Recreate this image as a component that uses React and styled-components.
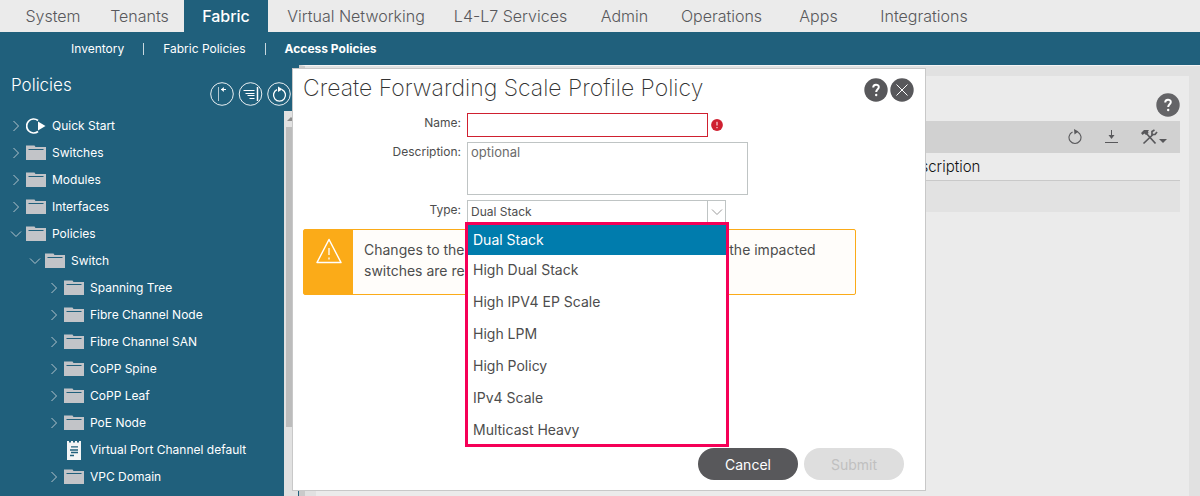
import React, { useState } from 'react';
import styled, { createGlobalStyle, css } from 'styled-components';

const GlobalStyle = createGlobalStyle`
  * {
    box-sizing: border-box;
  }

  html, body, #root {
    height: 100%;
  }

  body {
    margin: 0;
    overflow: hidden;
    background: #20607c;
    font-family: Inter, 'Liberation Sans', sans-serif;
    font-weight: 300;
    color: #4d4d4d;
  }

  button, input, textarea, select {
    font: inherit;
    color: inherit;
    margin: 0;
  }
`;

const Page = styled.div`
  display: flex;
  flex-direction: column;
  height: 100%;
`;

const MainNav = styled.nav`
  display: grid;
  grid-template-columns: 84px 89px 84px 176px 133px 95px 99px 95px 116px;
  flex: none;
  height: 32px;
  padding-left: 11px;
  background: #ebebeb;
`;

const NavTab = styled.a`
  display: flex;
  align-items: center;
  justify-content: center;
  font-size: 16px;
  white-space: nowrap;
  text-decoration: none;
  color: ${({ $active }) => ($active ? '#fff' : '#58585b')};
  background: ${({ $active }) => ($active ? '#20607c' : 'transparent')};
  font-weight: ${({ $active }) => ($active ? 500 : 300)};
`;

const SubNav = styled.nav`
  display: flex;
  align-items: center;
  flex: none;
  height: 33px;
  padding-left: 52px;
  background: #20607c;
`;

const SubLink = styled.a`
  padding: 0 19px;
  font-size: 12px;
  line-height: 12px;
  color: #fff;
  text-decoration: none;
  font-weight: ${({ $active }) => ($active ? 700 : 400)};

  & + & {
    border-left: 1px solid #c8d8df;
  }
`;

const Body = styled.div`
  display: flex;
  flex: 1;
  min-height: 0;
`;

const Sidebar = styled.aside`
  display: flex;
  flex-direction: column;
  flex: none;
  width: 299px;
  padding-right: 1px;
  background: #20607c;
  color: #fff;
`;

const SidebarHeader = styled.header`
  display: flex;
  justify-content: space-between;
  align-items: flex-start;
  flex: none;
  height: 46px;
  padding: 10px 7px 0 11px;
`;

const SidebarTitle = styled.h2`
  margin: 0;
  font-size: 17px;
  line-height: 20px;
  font-weight: 300;
`;

const SidebarTools = styled.div`
  display: flex;
  gap: 4px;
  padding-top: 7px;
`;

const IconButton = styled.button`
  display: flex;
  align-items: center;
  justify-content: center;
  padding: 0;
  border: 0;
  background: none;
  cursor: pointer;
`;

const SidebarScroll = styled.div`
  display: flex;
  flex: 1;
  min-height: 0;
`;

const Tree = styled.ul`
  flex: 1;
  margin: 0;
  padding: 1px 0 0;
  list-style: none;
  overflow: hidden;
`;

const TreeRow = styled.li`
  display: flex;
  align-items: center;
  height: 27px;
  padding-left: ${({ $level }) => 8 + $level * 19}px;
  font-size: 12px;
  font-weight: 400;
  white-space: nowrap;
`;

const Twisty = styled.span`
  display: flex;
  justify-content: center;
  width: 16px;
  margin-right: 2px;
`;

const TreeIcon = styled.span`
  display: flex;
  justify-content: center;
  width: 20px;
  margin-right: 6px;
`;

const ScrollTrack = styled.div`
  flex: none;
  width: 14px;
  padding: 0 2px;
  background: #e1e1e1;
`;

const ScrollArrow = styled.div`
  display: flex;
  justify-content: center;
  align-items: center;
  height: 16px;
`;

const ScrollThumb = styled.div`
  height: 300px;
  background: #bcbcbc;
`;

const Main = styled.main`
  flex: 1;
  min-width: 0;
  padding: 10px 11px 0 11px;
  border-top: 1px solid #f4f4f4;
  border-left: 6px solid #cacaca;
  background: #e1e1e1;
`;

const Panel = styled.section`
  height: 100%;
  padding: 17px 9px 0;
  background: #ebebeb;
`;

const PanelHeader = styled.header`
  display: flex;
  justify-content: flex-end;
  align-items: flex-start;
  height: 28px;
`;

const Toolbar = styled.div`
  display: flex;
  justify-content: flex-end;
  align-items: center;
  gap: 23px;
  height: 32px;
  padding-right: 13px;
  background: #d1d1d1;
`;

const DataTable = styled.table`
  width: 100%;
  border-collapse: collapse;
  table-layout: fixed;
  font-size: 15px;

  th {
    height: 27px;
    padding: 0 8px;
    border-bottom: 1px solid #c9c9c9;
    font-weight: 300;
    text-align: left;
    color: #111;
  }

  th:first-child {
    width: 568px;
  }

  td {
    height: 32px;
    background: #e2e2e2;
  }
`;

const Overlay = styled.div`
  position: fixed;
  inset: 68px 0 0;
  display: flex;
  justify-content: center;
  align-items: flex-start;
  padding-left: 18px;
`;

const Dialog = styled.section`
  width: 634px;
  background: #fff;
  border: 1px solid #c8c8c8;
`;

const DialogHeader = styled.header`
  display: flex;
  align-items: flex-start;
  justify-content: space-between;
  height: 44px;
  padding: 8px 11px 0 10px;
`;

const DialogTitle = styled.h1`
  margin: 0;
  font-size: 23px;
  line-height: 22px;
  font-weight: 200;
  color: #333;
`;

const DialogActions = styled.div`
  display: flex;
  gap: 2px;
  padding-top: 1px;
`;

const Form = styled.form`
  display: flex;
  flex-direction: column;
  padding: 0 18px 10px 10px;
`;

const Field = styled.div`
  position: relative;
  display: flex;
  align-items: flex-start;
  margin-bottom: 5px;
`;

const Label = styled.label`
  width: 158px;
  margin-right: 6px;
  font-size: 12px;
  line-height: 20px;
  font-weight: 400;
  text-align: right;
`;

const control = css`
  display: block;
  border: 1px solid #bfc4c4;
  border-radius: 0;
  background: #fff;
  padding: 0 3px;
  font-size: 12px;
  font-weight: 400;
  outline: none;
`;

const NameInput = styled.input`
  ${control}
  width: 241px;
  height: 24px;
  border-color: #cf2030;
`;

const ErrorMark = styled.span`
  display: flex;
  padding: 6px 0 0 3px;
`;

const DescriptionInput = styled.textarea`
  ${control}
  width: 281px;
  height: 53px;
  line-height: 18px;
  font-size: 13px;
  resize: none;

  &::placeholder {
    color: #6b6b6b;
    opacity: 1;
  }
`;

const SelectBox = styled.div`
  position: relative;
  display: flex;
`;

const TypeSelect = styled.select`
  ${control}
  appearance: none;
  width: 241px;
  height: 23px;
`;

const SelectArrow = styled(IconButton)`
  width: 18px;
  height: 23px;
  border: 1px solid #bfc4c4;
  border-left: 0;
`;

const Menu = styled.ul`
  position: absolute;
  top: 22px;
  left: -2px;
  z-index: 2;
  width: 264px;
  margin: 0;
  padding: 0;
  border: 3px solid #f50057;
  background: #fff;
  list-style: none;
`;

const MenuItem = styled.li`
  height: 32px;
  padding-left: 5px;
  font-size: 14px;
  line-height: 30px;
  font-weight: 400;
  cursor: pointer;
  color: ${({ $selected }) => ($selected ? '#fff' : '#4d4d4d')};
  background: ${({ $selected }) => ($selected ? '#007cad' : '#fff')};

  &:first-child {
    height: 30px;
  }

  &:last-child {
    height: 29px;
  }
`;

const Warning = styled.div`
  display: flex;
  width: 553px;
  height: 66px;
  margin: 1px 0 153px;
  border: 1px solid #fbab18;
  border-radius: 2px;
  background: #fffdfa;
`;

const WarningIcon = styled.div`
  display: flex;
  justify-content: center;
  flex: none;
  width: 49px;
  padding-top: 8px;
  background: #fbab18;
`;

const WarningText = styled.p`
  margin: 0;
  padding: 9px 11px;
  font-size: 14px;
  line-height: 21px;
  font-weight: 400;
`;

const Footer = styled.footer`
  display: flex;
  justify-content: flex-end;
  gap: 6px;
  padding-right: 3px;
`;

const PillButton = styled.button`
  width: 100px;
  height: 32px;
  padding: 0;
  border: 0;
  border-radius: 16px;
  font-size: 14px;
  font-weight: 400;
  color: #fff;
  background: #58585b;
  cursor: pointer;

  &:disabled {
    color: #c0c0c0;
    background: #dedede;
    cursor: default;
  }
`;

const tabs = [
  'System',
  'Tenants',
  'Fabric',
  'Virtual Networking',
  'L4-L7 Services',
  'Admin',
  'Operations',
  'Apps',
  'Integrations',
];

const subTabs = ['Inventory', 'Fabric Policies', 'Access Policies'];

const treeItems = [
  { label: 'Quick Start', level: 0, icon: 'quick' },
  { label: 'Switches', level: 0 },
  { label: 'Modules', level: 0 },
  { label: 'Interfaces', level: 0 },
  { label: 'Policies', level: 0, open: true },
  { label: 'Switch', level: 1, open: true },
  { label: 'Spanning Tree', level: 2 },
  { label: 'Fibre Channel Node', level: 2 },
  { label: 'Fibre Channel SAN', level: 2 },
  { label: 'CoPP Spine', level: 2 },
  { label: 'CoPP Leaf', level: 2 },
  { label: 'PoE Node', level: 2 },
  { label: 'Virtual Port Channel default', level: 2, icon: 'doc', leaf: true },
  { label: 'VPC Domain', level: 2 },
  { label: 'Fabric Node Controls', level: 2 },
];

const profileTypes = [
  'Dual Stack',
  'High Dual Stack',
  'High IPV4 EP Scale',
  'High LPM',
  'High Policy',
  'IPv4 Scale',
  'Multicast Heavy',
];

const Chevron = ({ open, color = '#b4c4cc' }) => (
  <svg width="12" height="12" viewBox="0 0 12 12" fill="none" stroke={color}>
    {open ? <path d="M1 3.5l5 5 5-5" /> : <path d="M3.5 1l5 5-5 5" />}
  </svg>
);

const FolderIcon = () => (
  <svg width="20" height="16" viewBox="0 0 20 16">
    <path d="M0 .5h8.500l1 1.500H20v13H0z" fill="#c2c4c8" />
    <path d="M2.500 4.500h15" stroke="#20607c" />
  </svg>
);

const QuickStartIcon = () => (
  <svg width="20" height="16" viewBox="0 0 20 16">
    <path d="M12 2.500a7 7 0 1 0 0 11" fill="none" stroke="#fff" strokeWidth="1.700" />
    <path d="M12 3.500L19.500 8 12 12.500z" fill="#fff" />
  </svg>
);

const DocIcon = () => (
  <svg width="14" height="20" viewBox="0 0 14 20">
    <path d="M0 1h2v1.500h2V1h2v1.500h2V1h2v1.500h2V1h2v19H0z" fill="#f2f4f5" />
    <path d="M4 6.800h7M3 10h8M4 12.500h7M3 15.500h4" stroke="#20607c" strokeWidth="1.300" />
  </svg>
);

const treeIcons = { quick: QuickStartIcon, doc: DocIcon };

const HelpIcon = ({ color = '#58585b' }) => (
  <svg width="24" height="24" viewBox="0 0 24 24">
    <circle cx="12" cy="12" r="11.700" fill={color} />
    <path d="M9.200 9.500c0-3.800 5.600-3.500 5.600-.5 0 2.200-2.600 2.200-2.600 5" fill="none" stroke="#fff" strokeWidth="2" />
    <circle cx="12.200" cy="17" r="1.200" fill="#fff" />
  </svg>
);

const CloseIcon = () => (
  <svg width="24" height="24" viewBox="0 0 24 24">
    <circle cx="12" cy="12" r="11.700" fill="#58585b" />
    <path d="M6.500 6.500l11 11M17.500 6.500l-11 11" stroke="#fff" />
  </svg>
);

const CollapseIcon = () => (
  <svg width="24" height="24" viewBox="0 0 24 24" fill="none" stroke="#fff">
    <circle cx="12" cy="12" r="11.300" strokeWidth=".9" />
    <path d="M8.500 5v14" stroke="#b4c8d2" />
    <path d="M11 7.500h5" />
    <path d="M13.800 5v5L11 7.500z" fill="#fff" stroke="none" />
  </svg>
);

const FilterTreeIcon = () => (
  <svg width="25" height="24" viewBox="0 0 25 24" fill="none" stroke="#fff">
    <circle cx="12.500" cy="12" r="11.300" strokeWidth=".9" />
    <path d="M5.500 8.500h11M7.500 11.500h9M9.500 13.500h7M11.500 16.500h5" />
    <path d="M19.500 5v14" strokeWidth="1.500" />
  </svg>
);

const RefreshTreeIcon = () => (
  <svg width="24" height="24" viewBox="0 0 24 24" fill="none" stroke="#fff">
    <circle cx="12" cy="12" r="11.300" strokeWidth=".9" />
    <path d="M15 7.700a6 6 0 1 1-5 0" strokeWidth="1.300" />
    <path d="M11 4.500l4.500 2.800L11 10z" fill="#fff" stroke="none" />
  </svg>
);

const RefreshIcon = () => (
  <svg width="14" height="16" viewBox="0 0 14 16" fill="none" stroke="#58585b">
    <path d="M9.500 3a6 6 0 1 1-5 0" strokeWidth="1.100" />
    <path d="M6 0l4.500 2.500L6.500 5.500z" fill="#58585b" stroke="none" />
  </svg>
);

const DownloadIcon = () => (
  <svg width="13" height="14" viewBox="0 0 13 14" fill="none" stroke="#58585b">
    <path d="M6.500 0v8M0 12.500h13" />
    <path d="M3.500 5h6l-3 4z" fill="#58585b" stroke="none" />
  </svg>
);

const ToolsIcon = () => (
  <svg width="26" height="16" viewBox="0 0 26 16" fill="none" stroke="#58585b">
    <path d="M5 4l9.500 10.500M12 5.500L2.500 14.500" strokeWidth="1.700" />
    <path d="M0 4l3-3h5L7 2.500 7.500 4 5 6 3.500 4.500 1.500 6z" fill="#58585b" stroke="none" />
    <path d="M13.500 1l-2.500 1.500v3h3l2-2.500" strokeWidth="1.700" />
    <path d="M18 10h8l-4 4z" fill="#58585b" stroke="none" />
  </svg>
);

const ErrorIcon = () => (
  <svg width="12" height="12" viewBox="0 0 12 12">
    <circle cx="6" cy="6" r="5.900" fill="#cf2030" />
    <path d="M6 2.800v3.700M6 8v1.200" stroke="#fff" />
  </svg>
);

const WarningTriangle = () => (
  <svg width="26" height="26" viewBox="0 0 26 26" fill="none" stroke="#fff">
    <path d="M13 1.500L25 24.500H1z" strokeWidth="1.500" strokeLinejoin="round" />
    <path d="M13 10v7M13 19.500v2" strokeWidth="1.300" />
  </svg>
);

const App = () => {
  const [type, setType] = useState('Dual Stack');

  return (
    <>
      <GlobalStyle />
      <Page>
        <MainNav>
          {tabs.map((tab) => (
            <NavTab key={tab} href="#" $active={tab === 'Fabric'}>{tab}</NavTab>
          ))}
        </MainNav>
        <SubNav>
          {subTabs.map((tab) => (
            <SubLink key={tab} href="#" $active={tab === 'Access Policies'}>{tab}</SubLink>
          ))}
        </SubNav>

        <Body>
          <Sidebar>
            <SidebarHeader>
              <SidebarTitle>Policies</SidebarTitle>
              <SidebarTools>
                <IconButton type="button" aria-label="Collapse"><CollapseIcon /></IconButton>
                <IconButton type="button" aria-label="Filter"><FilterTreeIcon /></IconButton>
                <IconButton type="button" aria-label="Refresh tree"><RefreshTreeIcon /></IconButton>
              </SidebarTools>
            </SidebarHeader>
            <SidebarScroll>
              <Tree>
                {treeItems.map((item) => {
                  const Icon = treeIcons[item.icon] || FolderIcon;
                  return (
                    <TreeRow key={item.label} $level={item.level}>
                      <Twisty>{!item.leaf && <Chevron open={item.open} />}</Twisty>
                      <TreeIcon><Icon /></TreeIcon>
                      {item.label}
                    </TreeRow>
                  );
                })}
              </Tree>
              <ScrollTrack>
                <ScrollArrow>
                  <svg width="8" height="4" viewBox="0 0 8 4"><path d="M0 4l4-4 4 4z" fill="#8c8c8c" /></svg>
                </ScrollArrow>
                <ScrollThumb />
              </ScrollTrack>
            </SidebarScroll>
          </Sidebar>

          <Main>
            <Panel>
              <PanelHeader>
                <IconButton type="button" aria-label="Help"><HelpIcon color="#646467" /></IconButton>
              </PanelHeader>
              <Toolbar>
                <IconButton type="button" aria-label="Refresh"><RefreshIcon /></IconButton>
                <IconButton type="button" aria-label="Download"><DownloadIcon /></IconButton>
                <IconButton type="button" aria-label="Tools"><ToolsIcon /></IconButton>
              </Toolbar>
              <DataTable>
                <thead>
                  <tr><th>Name</th><th>Description</th></tr>
                </thead>
                <tbody>
                  <tr><td /><td /></tr>
                </tbody>
              </DataTable>
            </Panel>
          </Main>
        </Body>
      </Page>

      <Overlay>
        <Dialog role="dialog" aria-labelledby="dialog-title">
          <DialogHeader>
            <DialogTitle id="dialog-title">Create Forwarding Scale Profile Policy</DialogTitle>
            <DialogActions>
              <IconButton type="button" aria-label="Dialog help"><HelpIcon /></IconButton>
              <IconButton type="button" aria-label="Close"><CloseIcon /></IconButton>
            </DialogActions>
          </DialogHeader>
          <Form onSubmit={(e) => e.preventDefault()}>
            <Field>
              <Label htmlFor="name">Name:</Label>
              <NameInput id="name" type="text" />
              <ErrorMark><ErrorIcon /></ErrorMark>
            </Field>
            <Field>
              <Label htmlFor="description">Description:</Label>
              <DescriptionInput id="description" placeholder="optional" />
            </Field>
            <Field>
              <Label htmlFor="type">Type:</Label>
              <SelectBox>
                <TypeSelect id="type" value={type} onChange={(e) => setType(e.target.value)}>
                  {profileTypes.map((name) => <option key={name}>{name}</option>)}
                </TypeSelect>
                <SelectArrow type="button" aria-label="Toggle types"><Chevron open color="#9a9a9a" /></SelectArrow>
                <Menu role="listbox">
                  {profileTypes.map((name) => (
                    <MenuItem
                      key={name}
                      role="option"
                      aria-selected={name === type}
                      $selected={name === type}
                      onClick={() => setType(name)}
                    >
                      {name}
                    </MenuItem>
                  ))}
                </Menu>
              </SelectBox>
            </Field>
            <Warning>
              <WarningIcon><WarningTriangle /></WarningIcon>
              <WarningText>
                Changes to the forwarding scale profile will apply after the impacted switches are reloaded.
              </WarningText>
            </Warning>
            <Footer>
              <PillButton type="button">Cancel</PillButton>
              <PillButton type="submit" disabled>Submit</PillButton>
            </Footer>
          </Form>
        </Dialog>
      </Overlay>
    </>
  );
};

export default App;
